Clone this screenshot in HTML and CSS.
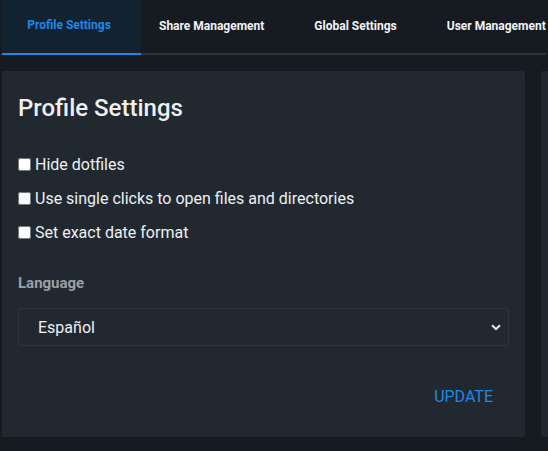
FILE: index.html
```html
<!DOCTYPE html>
<html>
<head>
<meta charset="utf-8">
<link rel="stylesheet" href="styles.css">
</head>
<body>
<div class="app">
  <nav class="tabs">
    <div class="tab active">Profile Settings</div>
    <div class="tab">Share Management</div>
    <div class="tab">Global Settings</div>
    <div class="tab">User Management</div>
  </nav>
  <main class="cards">
    <section class="card">
      <h2 class="title">Profile Settings</h2>
      <div class="options">
        <label class="check"><input type="checkbox"> Hide dotfiles</label>
        <label class="check"><input type="checkbox"> Use single clicks to open files and directories</label>
        <label class="check"><input type="checkbox"> Set exact date format</label>
      </div>
      <div class="field-label">Language</div>
      <div class="select">
        <span>Español</span>
        <svg class="chev" width="10" height="7" viewBox="0 0 10 7"><path d="M1 1.2 L5 5 L9 1.2" fill="none" stroke="#e6e6e6" stroke-width="2"/></svg>
      </div>
      <div class="actions"><span class="btn">UPDATE</span></div>
    </section>
    <section class="card"></section>
  </main>
</div>
</body>
</html>
```
FILE: styles.css
```css
* { box-sizing: border-box; }
html, body { margin: 0; padding: 0; }
body {
  background: #161b22;
  font-family: Roboto, "Noto Sans", sans-serif;
  color: #eef0f2;
  width: 548px;
  height: 451px;
  overflow: hidden;
}
.app { padding: 0 2px; }
.tabs {
  display: flex;
  height: 55px;
  border-bottom: 2px solid #2f3338;
  white-space: nowrap;
}
.tab {
  display: flex;
  align-items: center;
  font-size: 12px;
  font-weight: 700;
  color: #f2f3f5;
  padding: 0 25px 4px;
  margin-bottom: -2px;
  flex-shrink: 0;
}
.tab.active {
  width: 139px;
  justify-content: center;
  padding: 0 5px 4px 0;
  background: #132230;
  color: #1e88e5;
  border-bottom: 2px solid #1e88e5;
}
.tab.active + .tab { padding-left: 18px; }
.cards {
  display: flex;
  gap: 16px;
  margin-top: 16px;
}
.card {
  flex: 0 0 523px;
  height: 366px;
  background: #212830;
  border-radius: 2px;
  padding: 22px 16px 16px;
}
.title {
  margin: 0;
  font-size: 24px;
  font-weight: 500;
  line-height: 30px;
  color: #eef0f2;
}
.options {
  margin-top: 31px;
  display: flex;
  flex-direction: column;
  gap: 13px;
}
.check {
  display: flex;
  align-items: center;
  font-size: 16px;
  line-height: 21px;
}
.check input {
  margin: 0 4px 0 0;
  width: 13px;
  height: 13px;
}
.field-label {
  margin-top: 31px;
  font-size: 15px;
  font-weight: 700;
  color: #9aa0a6;
}
.select {
  margin-top: 16px;
  height: 38px;
  border: 1px solid #2f353d;
  border-radius: 2px;
  display: flex;
  align-items: center;
  justify-content: space-between;
  padding: 0 7px 0 19px;
  font-size: 16px;
}
.actions {
  display: flex;
  justify-content: flex-end;
  margin-top: 41px;
}
.btn {
  color: #1e88e5;
  font-size: 16px;
  padding: 0 16px;
}
```
